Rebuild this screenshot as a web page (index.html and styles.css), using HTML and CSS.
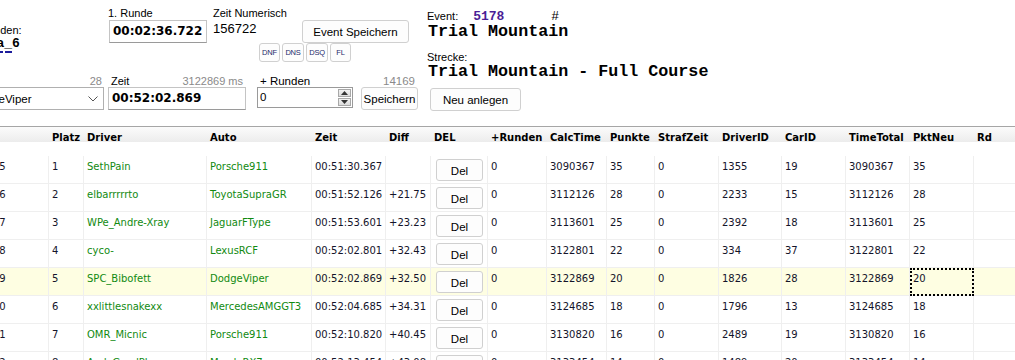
FILE: index.html
```html
<!DOCTYPE html>
<html lang="de">
<head>
  <meta charset="UTF-8" />
  <title>Rennergebnis</title>
  <link rel="stylesheet" href="styles.css">
</head>
<body>

  <div class="form">
    <div class="controls">

      <div class="band band-top">
        <div class="who">
          <div class="lbl who-lbl">Runden:</div>
          <div class="mono-b who-name">Liga_6</div>
          <div class="dash"></div>
        </div>

        <div class="runde1">
          <div class="lbl">1. Runde</div>
          <div class="tb tb-runde">00:02:36.722</div>
        </div>

        <div class="zeitnum">
          <div class="lbl">Zeit Numerisch</div>
          <div class="num">156722</div>
        </div>

        <div class="eventbtns">
          <button class="btn btn-event">Event Speichern</button>
          <div class="flags">
            <button class="btn flag w21">DNF</button>
            <button class="btn flag w22">DNS</button>
            <button class="btn flag w22">DSQ</button>
            <button class="btn flag w21">FL</button>
          </div>
        </div>
      </div>

      <div class="band band-bottom">
        <div class="grp grp-combo">
          <div class="lblrow"><span></span><span class="grey">28</span></div>
          <div class="combo">
            <span>DodgeViper</span>
            <svg class="chev" width="10" height="6" viewBox="0 0 10 6"><polyline points="0.5,0.5 5,5 9.5,0.5" fill="none" stroke="#555" stroke-width="1"/></svg>
          </div>
        </div>

        <div class="grp grp-zeit">
          <div class="lblrow"><span>Zeit</span><span class="grey">3122869 ms</span></div>
          <div class="tb tb-zeit">00:52:02.869</div>
        </div>

        <div class="grp grp-runden">
          <div class="lblrow"><span>+ Runden</span><span class="grey">14169</span></div>
          <div class="inrow">
            <div class="spin">
              <span>0</span>
              <div class="spin-btns">
                <div class="sb"><svg width="7" height="4" viewBox="0 0 7 4"><polygon points="3.5,0 7,4 0,4" fill="#333"/></svg></div>
                <div class="sb"><svg width="7" height="4" viewBox="0 0 7 4"><polygon points="0,0 7,0 3.5,4" fill="#333"/></svg></div>
              </div>
            </div>
            <button class="btn btn-save">Speichern</button>
          </div>
        </div>
      </div>

    </div>

    <div class="event-info">
      <div class="ev-line">Event:<span class="ev-id">5178      </span><span class="ev-hash">#</span></div>
      <div class="title">Trial Mountain</div>
      <div class="lbl strecke">Strecke:</div>
      <div class="title">Trial Mountain - Full Course</div>
      <button class="btn btn-new">Neu anlegen</button>
    </div>
  </div>

  <div class="grid">
    <div class="row head">
      <div class="c"></div>
      <div class="c">Platz</div>
      <div class="c">Driver</div>
      <div class="c">Auto</div>
      <div class="c">Zeit</div>
      <div class="c">Diff</div>
      <div class="c">DEL</div>
      <div class="c">+Runden</div>
      <div class="c">CalcTime</div>
      <div class="c">Punkte</div>
      <div class="c">StrafZeit</div>
      <div class="c">DriverID</div>
      <div class="c">CarID</div>
      <div class="c">TimeTotal</div>
      <div class="c">PktNeu</div>
      <div class="c">Rd</div>
    </div>

    <div class="row">
      <div class="c first">15</div><div class="c">1</div><div class="c green">SethPain</div><div class="c green">Porsche911</div>
      <div class="c">00:51:30.367</div><div class="c"></div><div class="c del"><button class="btn btn-del">Del</button></div>
      <div class="c">0</div><div class="c">3090367</div><div class="c">35</div><div class="c">0</div><div class="c">1355</div>
      <div class="c">19</div><div class="c">3090367</div><div class="c">35</div><div class="c"></div>
    </div>

    <div class="row">
      <div class="c first">16</div><div class="c">2</div><div class="c green">elbarrrrrto</div><div class="c green">ToyotaSupraGR</div>
      <div class="c">00:51:52.126</div><div class="c">+21.75</div><div class="c del"><button class="btn btn-del">Del</button></div>
      <div class="c">0</div><div class="c">3112126</div><div class="c">28</div><div class="c">0</div><div class="c">2233</div>
      <div class="c">15</div><div class="c">3112126</div><div class="c">28</div><div class="c"></div>
    </div>

    <div class="row">
      <div class="c first">17</div><div class="c">3</div><div class="c green">WPe_Andre-Xray</div><div class="c green">JaguarFType</div>
      <div class="c">00:51:53.601</div><div class="c">+23.23</div><div class="c del"><button class="btn btn-del">Del</button></div>
      <div class="c">0</div><div class="c">3113601</div><div class="c">25</div><div class="c">0</div><div class="c">2392</div>
      <div class="c">18</div><div class="c">3113601</div><div class="c">25</div><div class="c"></div>
    </div>

    <div class="row">
      <div class="c first">18</div><div class="c">4</div><div class="c green">cyco-</div><div class="c green">LexusRCF</div>
      <div class="c">00:52:02.801</div><div class="c">+32.43</div><div class="c del"><button class="btn btn-del">Del</button></div>
      <div class="c">0</div><div class="c">3122801</div><div class="c">22</div><div class="c">0</div><div class="c">334</div>
      <div class="c">37</div><div class="c">3122801</div><div class="c">22</div><div class="c"></div>
    </div>

    <div class="row selected">
      <div class="c first">19</div><div class="c">5</div><div class="c green">SPC_Bibofett</div><div class="c green">DodgeViper</div>
      <div class="c">00:52:02.869</div><div class="c">+32.50</div><div class="c del"><button class="btn btn-del">Del</button></div>
      <div class="c">0</div><div class="c">3122869</div><div class="c">20</div><div class="c">0</div><div class="c">1826</div>
      <div class="c">28</div><div class="c">3122869</div><div class="c focus">20</div><div class="c"></div>
    </div>

    <div class="row">
      <div class="c first">20</div><div class="c">6</div><div class="c green">xxlittlesnakexx</div><div class="c green">MercedesAMGGT3</div>
      <div class="c">00:52:04.685</div><div class="c">+34.31</div><div class="c del"><button class="btn btn-del">Del</button></div>
      <div class="c">0</div><div class="c">3124685</div><div class="c">18</div><div class="c">0</div><div class="c">1796</div>
      <div class="c">13</div><div class="c">3124685</div><div class="c">18</div><div class="c"></div>
    </div>

    <div class="row">
      <div class="c first">21</div><div class="c">7</div><div class="c green">OMR_Micnic</div><div class="c green">Porsche911</div>
      <div class="c">00:52:10.820</div><div class="c">+40.45</div><div class="c del"><button class="btn btn-del">Del</button></div>
      <div class="c">0</div><div class="c">3130820</div><div class="c">16</div><div class="c">0</div><div class="c">2489</div>
      <div class="c">19</div><div class="c">3130820</div><div class="c">16</div><div class="c"></div>
    </div>

    <div class="row">
      <div class="c first">22</div><div class="c">8</div><div class="c green">AndyGoodPlay</div><div class="c green">MazdaRX7</div>
      <div class="c">00:52:13.454</div><div class="c">+43.08</div><div class="c del"><button class="btn btn-del">Del</button></div>
      <div class="c">0</div><div class="c">3133454</div><div class="c">14</div><div class="c">0</div><div class="c">1489</div>
      <div class="c">20</div><div class="c">3133454</div><div class="c">14</div><div class="c"></div>
    </div>
  </div>

</body>
</html>
```

FILE: styles.css
```css
body {
  margin: 0;
  width: 1015px;
  height: 360px;
  overflow: hidden;
  background: #fff;
  color: #000;
  font-family: "Liberation Sans", Arial, sans-serif;
  font-size: 11px;
}

/* ---------- oberer Bereich ---------- */

.form {
  display: flex;
  height: 126px;
}

.controls {
  width: 427px;
  flex: none;
}

.band {
  display: flex;
  align-items: flex-start;
}

.band-top {
  height: 75px;
}

.lbl {
  line-height: 14px;
  white-space: nowrap;
}

.grey {
  color: #8a8a8a;
}

.btn {
  background: #fdfdfd;
  border: 1px solid #d0d0d0;
  border-radius: 3px;
  font-family: "Liberation Sans", Arial, sans-serif;
  font-size: 11px;
  color: #000;
  padding: 0;
  box-sizing: border-box;
}

.tb {
  box-sizing: border-box;
  height: 23px;
  border: 1px solid #c4c4c4;
  border-bottom-color: #9a9a9a;
  padding-left: 3px;
  font-family: "DejaVu Sans", Verdana, sans-serif;
  font-weight: bold;
  font-size: 12px;
  line-height: 21px;
  white-space: nowrap;
}

.who {
  width: 104px;
  flex: none;
  padding-top: 23px;
  overflow: hidden;
  white-space: nowrap;
}

.who-lbl {
  margin-left: -20px;
}

.mono-b {
  font-family: "Liberation Mono", "Courier New", monospace;
  font-weight: bold;
  font-size: 13px;
  line-height: 14px;
}

.who-name {
  margin-left: -27px;
}

.dash {
  width: 12px;
  height: 2px;
  background: linear-gradient(to right, #1c1c9c 0 3px, transparent 3px 5px, #1c1c9c 5px 12px);
}

.runde1 {
  width: 105px;
  flex: none;
  margin-left: 4px;
  padding-top: 6px;
}

.tb-runde {
  width: 98px;
  margin-left: 1px;
}

.zeitnum {
  width: 46px;
  flex: none;
  padding-top: 6px;
  white-space: nowrap;
}

.num {
  font-size: 13px;
  line-height: 16px;
  margin-top: 1px;
}

.eventbtns {
  padding-top: 20px;
}

.btn-event {
  display: block;
  margin-left: 43px;
  width: 107px;
  height: 23px;
  font-size: 11.5px;
}

.flags {
  display: flex;
  gap: 2px;
}

.flag {
  height: 19px;
  font-family: "Liberation Sans", sans-serif;
  font-size: 7.5px;
  color: #1e2a6a;
  letter-spacing: -0.2px;
}

.w21 { width: 21px; }
.w22 { width: 22px; }

.lblrow {
  display: flex;
  justify-content: space-between;
  height: 12px;
  line-height: 12px;
  white-space: nowrap;
}

.grp-combo {
  width: 104px;
  flex: none;
}

.grp-combo .lblrow {
  padding-right: 2px;
}

.combo {
  display: flex;
  align-items: center;
  justify-content: space-between;
  box-sizing: border-box;
  margin-left: -34px;
  width: 138px;
  height: 23px;
  padding: 0 5px 0 4px;
  border: 1px solid #b0b0b0;
  white-space: nowrap;
  font-size: 11.5px;
}

.chev {
  display: block;
}

.grp-zeit {
  width: 138px;
  flex: none;
  margin-left: 4px;
}

.grp-zeit .lblrow {
  padding: 0 3px;
}

.tb-zeit {
  width: 138px;
}

.grp-runden {
  width: 161px;
  flex: none;
  margin-left: 11px;
}

.grp-runden .lblrow {
  padding: 0 3px;
  font-size: 11.5px;
}

.inrow {
  display: flex;
  align-items: flex-start;
  gap: 8px;
}

.spin {
  display: flex;
  justify-content: space-between;
  box-sizing: border-box;
  width: 96px;
  height: 21px;
  border: 1px solid #9a9a9a;
  padding: 1px 1px 1px 2px;
  line-height: 17px;
  font-size: 11.5px;
}

.spin-btns {
  display: flex;
  flex-direction: column;
  gap: 1px;
}

.sb {
  box-sizing: border-box;
  width: 13px;
  height: 8px;
  border: 1px solid #a8a8a8;
  background: linear-gradient(#f2f2f2, #dcdcdc);
  display: flex;
  align-items: center;
  justify-content: center;
}

.sb svg {
  display: block;
}

.btn-save {
  width: 57px;
  height: 23px;
  font-size: 11.5px;
}

.event-info {
  padding-top: 10px;
  white-space: nowrap;
}

.ev-line {
  line-height: 12px;
}

.ev-id {
  margin-left: 15px;
  font-family: "Liberation Mono", monospace;
  font-weight: bold;
  font-size: 13px;
  color: #4a1e96;
  white-space: pre;
}

.ev-hash {
  font-family: "Liberation Mono", monospace;
  font-size: 13px;
}

.title {
  font-family: "Liberation Mono", "Courier New", monospace;
  font-weight: bold;
  font-size: 16.7px;
  line-height: 18px;
  margin-left: 1px;
}

.strecke {
  margin-top: 11px;
  line-height: 11px;
}

.btn-new {
  display: block;
  margin: 7px 0 0 3px;
  width: 91px;
  height: 23px;
  font-size: 11.5px;
}

/* ---------- Ergebnistabelle ---------- */

.grid {
  margin-left: -40px;
  width: 1078px;
  font-family: "DejaVu Sans", Verdana, sans-serif;
  font-size: 10px;
  color: #14142a;
}

.row {
  display: grid;
  grid-template-columns: 89px 35px 123px 105px 74px 45px 57px 59px 60px 48px 64px 63px 64px 64px 64px 64px;
  height: 28px;
}

.c {
  box-sizing: border-box;
  padding: 4px 0 0 3px;
  line-height: 14px;
  white-space: nowrap;
  overflow: hidden;
  border-right: 1px solid #efefef;
  border-bottom: 1px solid #efefef;
}

.c.first {
  padding-left: 33px;
}

.head {
  box-sizing: border-box;
  height: 30px;
  border-top: 1px solid #a6a6a6;
  background: linear-gradient(#fbfbfb 0, #ececec 15px, #fff 15px);
  font-weight: bold;
  color: #000;
}

.head .c {
  border: none;
  padding-top: 4px;
}

.green {
  color: #118a11;
}

.c.del {
  padding: 3px 0 0 5px;
}

.btn-del {
  display: block;
  width: 47px;
  height: 22px;
  font-size: 11.5px;
  line-height: 22px;
}

.selected {
  background: #fefee2;
}

.c.focus {
  outline: 2px dotted #000;
  outline-offset: -2px;
}
```
